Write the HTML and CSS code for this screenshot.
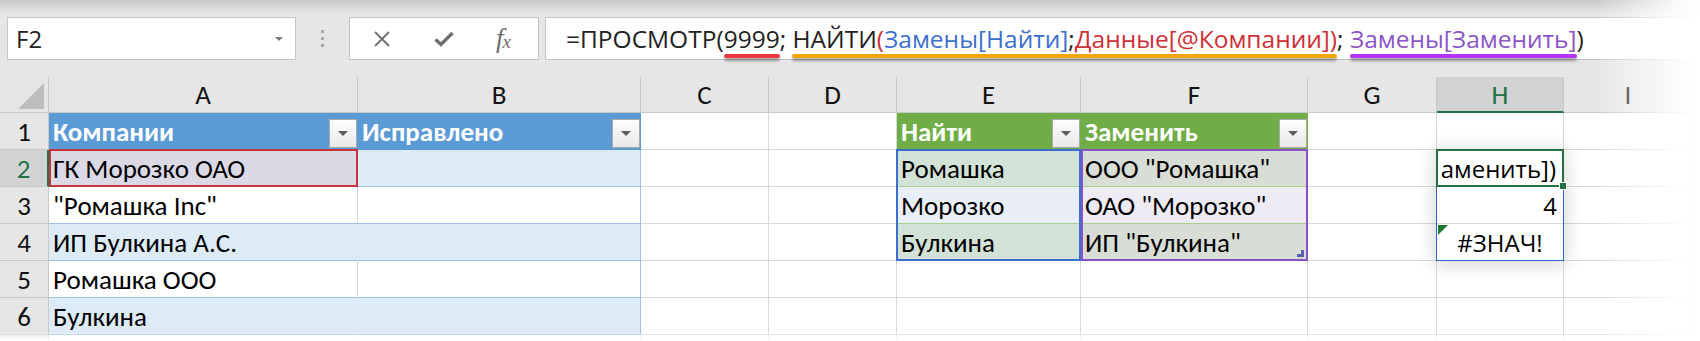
FILE: index.html
```html
<!DOCTYPE html>
<html lang="ru">
<head>
<meta charset="utf-8">
<title>Excel</title>
<link rel="stylesheet" href="styles.css">
</head>
<body>
<div class="app">
  <div class="fbar">
    <div class="namebox"><span class="nb-text">F2</span><span class="nb-arrow"></span></div>
    <div class="grip"><i></i><i></i><i></i></div>
    <div class="fxbtns">
      <svg class="ic-x" viewBox="0 0 18 18" width="18" height="18"><path d="M2 2 L16 16 M16 2 L2 16" stroke="#6e6e6e" stroke-width="1.8" fill="none"/></svg>
      <svg class="ic-ok" viewBox="0 0 20 18" width="20" height="18"><path d="M1.5 9.5 L7 14.5 L18.5 3" stroke="#6e6e6e" stroke-width="3.4" fill="none"/></svg>
      <span class="fx"><i>f</i><i class="x">x</i></span>
    </div>
    <div class="formula"><span>=ПРОСМОТР(</span><span class="ul ul-red">9999</span><span>;&nbsp;</span><span class="ul ul-orange">НАЙТИ<span class="t-red">(</span><span class="t-blue">Замены[Найти]</span>;<span class="t-red">Данные[@Компании])</span></span><span>;&nbsp;</span><span class="ul ul-purple t-purple">Замены[Заменить]</span><span>)</span></div>
  </div>

  <div class="sheet">
    <div class="corner"><span class="tri"></span></div>
    <div class="ch">A</div><div class="ch">B</div><div class="ch">C</div><div class="ch">D</div><div class="ch">E</div><div class="ch">F</div><div class="ch">G</div><div class="ch sel">H</div><div class="ch">I</div><div class="ch"></div>

    <div class="rh">1</div>
    <div class="c h-blue">Компании<span class="dd"></span></div>
    <div class="c h-blue">Исправлено<span class="dd"></span></div>
    <div class="c"></div><div class="c"></div>
    <div class="c h-green">Найти<span class="dd"></span></div>
    <div class="c h-green">Заменить<span class="dd"></span></div>
    <div class="c"></div><div class="c"></div><div class="c"></div><div class="c"></div>

    <div class="rh sel">2</div>
    <div class="c ref-a">ГК Морозко ОАО</div>
    <div class="c band1 last1"></div>
    <div class="c"></div><div class="c"></div>
    <div class="c e-band">Ромашка</div>
    <div class="c f-band">ООО "Ромашка"</div>
    <div class="c"></div>
    <div class="c hv edit"><span>аменить])</span></div>
    <div class="c"></div><div class="c"></div>

    <div class="rh">3</div>
    <div class="c row1">"Ромашка Inc"</div>
    <div class="c row1 last1"></div>
    <div class="c"></div><div class="c"></div>
    <div class="c e-plain">Морозко</div>
    <div class="c f-plain">ОАО "Морозко"</div>
    <div class="c"></div>
    <div class="c hv num">4</div>
    <div class="c"></div><div class="c"></div>

    <div class="rh">4</div>
    <div class="c band1">ИП Булкина А.С.</div>
    <div class="c band1 last1"></div>
    <div class="c"></div><div class="c"></div>
    <div class="c e-band">Булкина</div>
    <div class="c f-band rs">ИП "Булкина"<span class="resize"></span></div>
    <div class="c"></div>
    <div class="c hv err">#ЗНАЧ!</div>
    <div class="c"></div><div class="c"></div>

    <div class="rh">5</div>
    <div class="c row1">Ромашка ООО</div>
    <div class="c row1 last1"></div>
    <div class="c"></div><div class="c"></div><div class="c"></div><div class="c"></div><div class="c"></div><div class="c"></div><div class="c"></div><div class="c"></div>

    <div class="rh">6</div>
    <div class="c band1">Булкина</div>
    <div class="c band1 last1"></div>
    <div class="c"></div><div class="c"></div><div class="c"></div><div class="c"></div><div class="c"></div><div class="c"></div><div class="c"></div><div class="c"></div>

    <div class="rh"></div>
    <div class="c"></div><div class="c"></div><div class="c"></div><div class="c"></div><div class="c"></div><div class="c"></div><div class="c"></div><div class="c"></div><div class="c"></div><div class="c"></div>

    <div class="ovl">
      <div class="o-red"></div>
      <div class="o-blue"></div>
      <div class="o-purple"></div>
      <div class="o-shadow"></div>
      <div class="o-hblue"></div>
      <div class="o-green"><span class="handle"></span></div>
    </div>
  </div>

  <div class="fade-top"></div>
  <div class="fade-right"></div>
  <div class="fade-bottom"></div>
</div>
</body>
</html>
```

FILE: styles.css
```css
* { box-sizing: border-box; }
html, body { margin: 0; padding: 0; }
body {
  width: 1700px;
  height: 341px;
  overflow: hidden;
  background: #fff;
  font-family: "Carlito", "Liberation Sans Narrow", "Roboto", sans-serif;
}
.app { position: relative; width: 1700px; height: 341px; overflow: hidden; }

/* formula bar */
.fbar {
  height: 77px;
  background: #e6e6e6;
  display: flex;
  align-items: flex-start;
  padding: 17px 0 0 7px;
}
.namebox {
  width: 289px;
  height: 43px;
  background: #fff;
  border: 1px solid #c6c6c6;
  display: flex;
  align-items: center;
  padding: 0 12px 0 8px;
  font-family: "Open Sans", "Noto Sans", sans-serif;
  font-size: 24px;
  color: #222;
}
.nb-text { flex: 1; }
.nb-arrow {
  width: 0; height: 0;
  border-left: 4px solid transparent;
  border-right: 4px solid transparent;
  border-top: 4px solid #7a7a7a;
}
.grip {
  width: 53px;
  height: 43px;
  display: flex;
  flex-direction: column;
  align-items: center;
  justify-content: center;
  gap: 4px;
}
.grip i { display: block; width: 3px; height: 3px; background: #a8a8a8; }
.fxbtns {
  width: 190px;
  height: 43px;
  background: #fff;
  border: 1px solid #c6c6c6;
  display: flex;
  align-items: center;
  padding: 0 0 0 23px;
}
.ic-x { margin-right: 43px; }
.ic-ok { margin-right: 42px; }
.fx { font-family: "Liberation Serif", serif; color: #6e6e6e; font-size: 27px; line-height: 1; letter-spacing: -1px; }
.fx .x { font-size: 19px; position: relative; top: 1px; }
.formula {
  flex: 1;
  height: 43px;
  margin-left: 6px;
  background: #fff;
  border: 1px solid #c6c6c6;
  border-right: none;
  padding-left: 20px;
  display: flex;
  align-items: center;
  white-space: nowrap;
  font-family: "Open Sans", "Noto Sans", sans-serif;
  font-size: 24.5px;
  color: #222;
}
.ul { position: relative; }
.ul::after {
  content: "";
  position: absolute;
  left: 0; right: 0;
  bottom: -3px;
  height: 4px;
  border-radius: 2px;
  box-shadow: 0 3px 3px rgba(0,0,0,0.35);
}
.ul-red::after { background: #ec3b3f; }
.ul-orange::after { background: #f4a40c; }
.ul-purple::after { background: #b433f4; }
.t-red { color: #cf3038; }
.t-blue { color: #3b70cf; }
.t-purple { color: #8b55c7; }

/* sheet */
.sheet {
  position: relative;
  display: grid;
  grid-template-columns: 49px 309px 283px 128px 128px 184px 227px 129px 127px 129px 1fr;
  grid-template-rows: 36px repeat(7, 37px);
  font-size: 27px;
  color: #000;
}
.corner {
  background: #e6e6e6;
  border-right: 1px solid #c8c8c8;
  border-bottom: 1px solid #c8c8c8;
  display: flex;
  align-items: flex-end;
  justify-content: flex-end;
  padding: 0 4px 3px 0;
}
.tri {
  width: 26px; height: 26px;
  background: #bdbdbd;
  clip-path: polygon(100% 0, 100% 100%, 0 100%);
}
.ch, .rh {
  background: #e6e6e6;
  border-right: 1px solid #c8c8c8;
  border-bottom: 1px solid #c8c8c8;
  display: flex;
  align-items: center;
  justify-content: center;
  color: #111;
}
.ch.sel { background: #d3d3d3; color: #217346; border-bottom: 2px solid #217346; }
.rh.sel { background: #d3d3d3; color: #217346; border-right: 2px solid #217346; }

.c {
  border-right: 1px solid #d9d9d9;
  border-bottom: 1px solid #d9d9d9;
  display: flex;
  align-items: center;
  padding: 0 4px;
  white-space: nowrap;
  min-width: 0;
  position: relative;
}
.h-blue, .h-green {
  color: #fff;
  font-weight: 700;
  padding-right: 0;
}
.h-blue { background: #5b9bd5; border-color: #5b9bd5; }
.h-green { background: #70ad47; border-color: #70ad47; }
.dd {
  margin-left: auto;
  align-self: flex-end;
  width: 28px;
  height: 29px;
  margin-bottom: 1px;
  background: linear-gradient(#fdfdfd, #e9e9e9);
  border: 1px solid #a9a9a9;
  display: flex;
  align-items: center;
  justify-content: center;
}
.dd::after {
  content: "";
  width: 0; height: 0;
  border-left: 5px solid transparent;
  border-right: 5px solid transparent;
  border-top: 5px solid #5c5c5c;
}

.ref-a { background: #dbd9e6; border-right-color: #dbd9e6; border-bottom-color: #9bc2e6; }
.band1 { background: #ddebf7; border-right-color: #ddebf7; border-bottom-color: #9bc2e6; }
.row1 { border-bottom-color: #9bc2e6; }
.last1 { border-right-color: #9bc2e6; }

.e-band { background: #d3e2d7; border-right-color: #d3e2d7; border-bottom-color: #a9d08e; }
.e-plain { background: #e9eef8; border-right-color: #e9eef8; border-bottom-color: #a9d08e; }
.f-band { background: #d8ddd6; border-bottom-color: #a9d08e; }
.f-plain { background: #efebf5; border-bottom-color: #a9d08e; }
.resize {
  position: absolute;
  right: 3px;
  bottom: 3px;
  width: 7px; height: 7px;
  border-right: 3px solid #5a5fb4;
  border-bottom: 3px solid #5a5fb4;
}

.hv { font-family: "Open Sans", "Noto Sans", sans-serif; font-size: 24px; }
.edit { justify-content: flex-end; overflow: hidden; padding-right: 7px; }
.num { justify-content: flex-end; padding-right: 6px; }
.err { justify-content: center; }
.err::before {
  content: "";
  position: absolute;
  left: 1px; top: 1px;
  width: 10px; height: 10px;
  background: #1f7a2f;
  clip-path: polygon(0 0, 100% 0, 0 100%);
}

/* overlays for reference highlights */
.ovl {
  position: absolute;
  inset: 0;
  display: grid;
  grid-template-columns: 49px 309px 283px 128px 128px 184px 227px 129px 127px 129px 1fr;
  grid-template-rows: 36px repeat(7, 37px);
  pointer-events: none;
}
.o-red { grid-column: 2; grid-row: 3; border: 2px solid #c4343c; margin-top: -1px; }
.o-blue { grid-column: 6; grid-row: 3 / 6; border: 2px solid #3a6fcf; margin: -1px 0 0 -1px; }
.o-purple { grid-column: 7; grid-row: 3 / 6; border: 2px solid #8753c4; margin: -1px 0 0 0; }
.o-shadow { grid-column: 9; grid-row: 3 / 6; box-shadow: 0 2px 16px 2px rgba(0,0,0,0.16); margin: -1px 0 0 -1px; }
.o-hblue { grid-column: 9; grid-row: 4 / 6; border: 2px solid #2d62cc; border-top: none; margin-left: -1px; border-width: 0 1.5px 1.5px 1.5px; }
.o-green { grid-column: 9; grid-row: 3; border: 2px solid #217346; margin: -1px 0 0 -1px; position: relative; }
.handle {
  position: absolute;
  right: -5px;
  bottom: -5px;
  width: 8px; height: 8px;
  background: #217346;
  border: 1px solid #fff;
}

/* screenshot edge effects */
.fade-top {
  position: absolute;
  top: 0; left: 0; right: 0;
  height: 14px;
  background: linear-gradient(rgba(0,0,0,0.13), rgba(0,0,0,0));
  pointer-events: none;
}
.fade-right {
  position: absolute;
  top: 0; right: 0; bottom: 0;
  width: 105px;
  background: linear-gradient(to right, rgba(255,255,255,0), rgba(255,255,255,0.85) 75%, #fff);
  pointer-events: none;
}
.fade-bottom {
  position: absolute;
  left: 0; right: 0; bottom: 0;
  height: 8px;
  background: linear-gradient(rgba(255,255,255,0.2), #fff);
  pointer-events: none;
}
```
